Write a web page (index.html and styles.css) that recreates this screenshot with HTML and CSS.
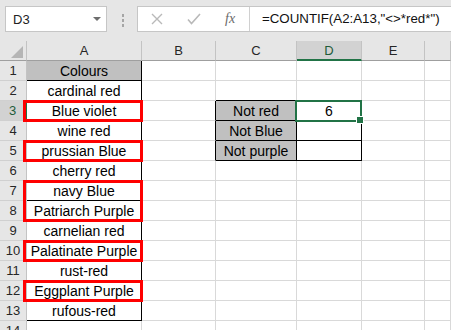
FILE: index.html
```html
<!DOCTYPE html>
<html>
<head>
    <title>Countif not red</title>
    <link rel="stylesheet" href="styles.css">
</head>
<body>
    <div class="toolbar">
        <div class="namebox">
            <span>D3</span>
            <span class="caret"></span>
        </div>
        <div class="grip"><i></i><i></i><i></i></div>
        <div class="fxbox">
            <div class="fxicons">
                <svg class="cancel" width="12" height="12" viewBox="0 0 12 12">
                    <path d="M1 1 L11 11 M11 1 L1 11" stroke="#b9b9b9" stroke-width="1.4" fill="none"/>
                </svg>
                <svg class="enter" width="14" height="12" viewBox="0 0 14 12">
                    <path d="M1 6.5 L4.5 10.5 L13 1" stroke="#b9b9b9" stroke-width="1.6" fill="none"/>
                </svg>
                <span class="fx">fx</span>
            </div>
            <div class="formula">=COUNTIF(A2:A13,"&lt;&gt;*red*")</div>
        </div>
    </div>

    <div class="sheet">
        <div class="grid">
            <div class="hd corner"><span class="tri"></span></div>
            <div class="hd">A</div>
            <div class="hd">B</div>
            <div class="hd">C</div>
            <div class="hd hd-on">D</div>
            <div class="hd">E</div>
            <div class="hd"></div>

            <div class="rh">1</div>
            <div class="c br bb fill">Colours</div>
            <div class="c"></div>
            <div class="c"></div>
            <div class="c"></div>
            <div class="c"></div>
            <div class="c"></div>

            <div class="rh">2</div>
            <div class="c br bb">cardinal red</div>
            <div class="c"></div>
            <div class="c bb"></div>
            <div class="c bb"></div>
            <div class="c"></div>
            <div class="c"></div>

            <div class="rh rh-on">3</div>
            <div class="c br bb">Blue violet</div>
            <div class="c br"></div>
            <div class="c br bb fill">Not red</div>
            <div class="c br bb">6</div>
            <div class="c"></div>
            <div class="c"></div>

            <div class="rh">4</div>
            <div class="c br bb">wine red</div>
            <div class="c br"></div>
            <div class="c br bb fill">Not Blue</div>
            <div class="c br bb"></div>
            <div class="c"></div>
            <div class="c"></div>

            <div class="rh">5</div>
            <div class="c br bb">prussian Blue</div>
            <div class="c br"></div>
            <div class="c br bb fill">Not purple</div>
            <div class="c br bb"></div>
            <div class="c"></div>
            <div class="c"></div>

            <div class="rh">6</div>
            <div class="c br bb">cherry red</div>
            <div class="c"></div>
            <div class="c"></div>
            <div class="c"></div>
            <div class="c"></div>
            <div class="c"></div>

            <div class="rh">7</div>
            <div class="c br bb">navy Blue</div>
            <div class="c"></div>
            <div class="c"></div>
            <div class="c"></div>
            <div class="c"></div>
            <div class="c"></div>

            <div class="rh">8</div>
            <div class="c br bb">Patriarch Purple</div>
            <div class="c"></div>
            <div class="c"></div>
            <div class="c"></div>
            <div class="c"></div>
            <div class="c"></div>

            <div class="rh">9</div>
            <div class="c br bb">carnelian red</div>
            <div class="c"></div>
            <div class="c"></div>
            <div class="c"></div>
            <div class="c"></div>
            <div class="c"></div>

            <div class="rh">10</div>
            <div class="c br bb">Palatinate Purple</div>
            <div class="c"></div>
            <div class="c"></div>
            <div class="c"></div>
            <div class="c"></div>
            <div class="c"></div>

            <div class="rh">11</div>
            <div class="c br bb">rust-red</div>
            <div class="c"></div>
            <div class="c"></div>
            <div class="c"></div>
            <div class="c"></div>
            <div class="c"></div>

            <div class="rh">12</div>
            <div class="c br bb">Eggplant Purple</div>
            <div class="c"></div>
            <div class="c"></div>
            <div class="c"></div>
            <div class="c"></div>
            <div class="c"></div>

            <div class="rh">13</div>
            <div class="c br bb">rufous-red</div>
            <div class="c"></div>
            <div class="c"></div>
            <div class="c"></div>
            <div class="c"></div>
            <div class="c"></div>

            <div class="rh">14</div>
            <div class="c"></div>
            <div class="c"></div>
            <div class="c"></div>
            <div class="c"></div>
            <div class="c"></div>
            <div class="c"></div>
        </div>

        <!-- highlighted colour names -->
        <div class="mark mark-r3"></div>
        <div class="mark mark-r5"></div>
        <div class="mark mark-r7 mark-tall"></div>
        <div class="mark mark-r10"></div>
        <div class="mark mark-r12"></div>

        <!-- active cell D3 -->
        <div class="sel"><span class="handle"></span></div>
    </div>
</body>
</html>
```

FILE: styles.css
```css
body {
    margin: 0;
    background-color: #ffffff;
    font-family: "Liberation Sans", Arial, sans-serif;
    overflow: hidden;
}

/* formula bar */
.toolbar {
    display: flex;
    align-items: flex-start;
    height: 41px;
    padding-top: 6px;
    box-sizing: border-box;
    background-color: #e6e6e6;
}

.namebox {
    display: flex;
    align-items: center;
    justify-content: space-between;
    width: 102px;
    height: 26px;
    margin-left: 5px;
    padding: 0 5px 0 7px;
    box-sizing: border-box;
    background-color: #fff;
    border: 1px solid #c6c6c6;
    font-size: 13px;
    color: #222;
}

.caret {
    width: 0;
    height: 0;
    border-left: 4px solid transparent;
    border-right: 4px solid transparent;
    border-top: 4px solid #6d6d6d;
}

.grip {
    display: flex;
    flex-direction: column;
    gap: 2px;
    margin: 8px 0 0 15px;
}

.grip i {
    display: block;
    width: 2px;
    height: 3px;
    background-color: #a5a5a5;
}

.fxbox {
    display: flex;
    flex: 1;
    height: 26px;
    margin-left: 13px;
    box-sizing: border-box;
    background-color: #fff;
    border: 1px solid #c6c6c6;
    border-right: none;
}

.fxicons {
    display: flex;
    align-items: center;
    width: 112px;
    padding-left: 13px;
    box-sizing: border-box;
    border-right: 1px solid #d0d0d0;
}

.enter {
    margin-left: 24px;
}

.fx {
    margin-left: 24px;
    font-family: "Liberation Serif", serif;
    font-style: italic;
    font-size: 14px;
    color: #6a6a6a;
}

.formula {
    padding-left: 12px;
    line-height: 24px;
    font-size: 13.3px;
    color: #111;
    white-space: nowrap;
}

/* sheet */
.sheet {
    position: relative;
}

.grid {
    display: grid;
    grid-template-columns: 27px 115px 74px 81px 65px 63px 1fr;
    grid-auto-rows: 20px;
}

.hd,
.rh,
.c {
    box-sizing: border-box;
    text-align: center;
    white-space: nowrap;
    overflow: hidden;
}

.hd {
    background-color: #e6e6e6;
    border-right: 1px solid #c3c3c3;
    border-bottom: 1px solid #9f9f9f;
    font-size: 13px;
    line-height: 20px;
    color: #262626;
}

.hd-on {
    background-color: #d2d2d2;
    border-bottom: 2px solid #217346;
    color: #1e5c3a;
}

.corner {
    position: relative;
}

.tri {
    position: absolute;
    right: 3px;
    bottom: 2px;
    width: 0;
    height: 0;
    border-left: 12px solid transparent;
    border-bottom: 12px solid #b5b5b5;
}

.rh {
    background-color: #e6e6e6;
    border-right: 1px solid #c3c3c3;
    border-bottom: 1px solid #d0d0d0;
    font-size: 13px;
    line-height: 20px;
    color: #262626;
}

.rh-on {
    background-color: #d2d2d2;
    border-right: 2px solid #217346;
    color: #1e5c3a;
}

.c {
    border-right: 1px solid #d9d9d9;
    border-bottom: 1px solid #d9d9d9;
    font-size: 14px;
    line-height: 20px;
    color: #000;
}

.c.br {
    border-right-color: #000;
}

.c.bb {
    border-bottom-color: #000;
}

.c.fill {
    background-color: #c0c0c0;
}

/* red outlines round the matching names */
.mark {
    position: absolute;
    left: 23px;
    width: 120px;
    height: 22px;
    box-sizing: border-box;
    border: 3px solid #ff0000;
}

.mark-tall {
    height: 42px;
}

.mark-r3 { top: 59px; }
.mark-r5 { top: 99px; }
.mark-r7 { top: 139px; }
.mark-r10 { top: 199px; }
.mark-r12 { top: 239px; }

.sel {
    position: absolute;
    left: 295px;
    top: 59px;
    width: 67px;
    height: 22px;
    box-sizing: border-box;
    border: 2px solid #217346;
}

.handle {
    position: absolute;
    right: -4px;
    bottom: -4px;
    width: 6px;
    height: 6px;
    background-color: #217346;
    border: 1px solid #fff;
}
```
